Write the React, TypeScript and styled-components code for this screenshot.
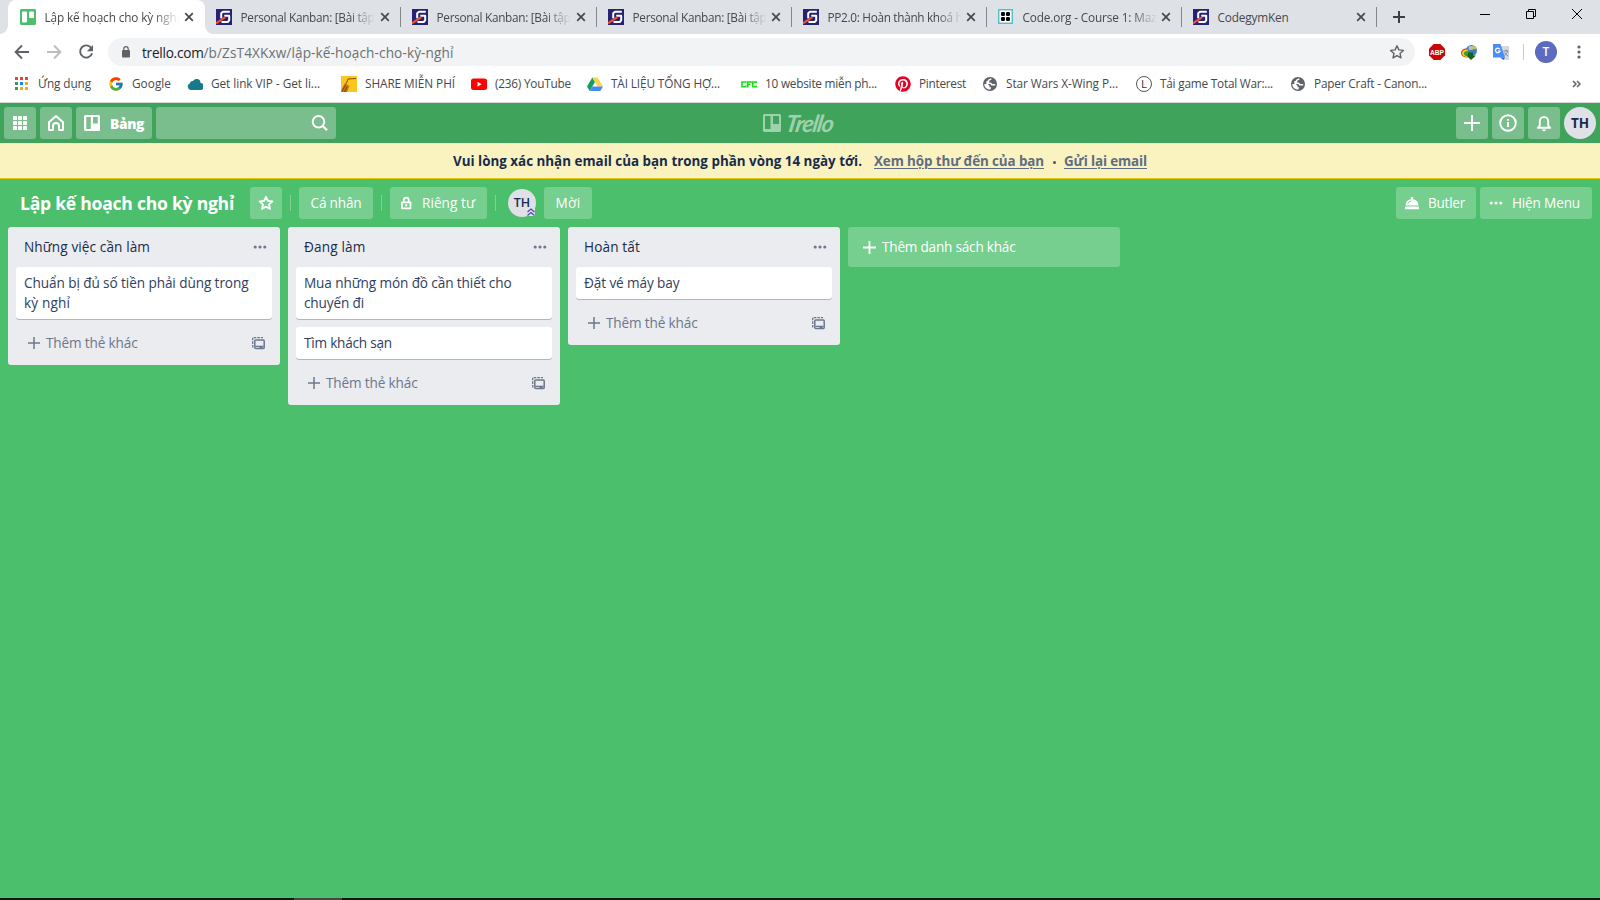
import React, { useLayoutEffect, useRef } from 'react';
import styled, { createGlobalStyle, css } from 'styled-components';
import { FcGoogle } from 'react-icons/fc';
import { FaPinterest } from 'react-icons/fa';

const Global = createGlobalStyle`
  * { box-sizing: border-box; }
  body { margin: 0; overflow: hidden; font-family: "Open Sans", "Noto Sans", sans-serif; }
  svg { display: block; flex: none; }
`;

/* ---------- text tracked to a given line width ---------- */

const Tracked = styled.span`
  display: inline-block;
  white-space: nowrap;
  flex: none;
  text-decoration: inherit;
`;

function Fit({ w, children }: { w: number; children: string }) {
  const ref = useRef<HTMLSpanElement>(null);
  useLayoutEffect(() => {
    const el = ref.current;
    if (!el) return;
    el.style.letterSpacing = '0px';
    const natural = el.getBoundingClientRect().width;
    el.style.letterSpacing = `${(w - natural) / children.length}px`;
  }, [w, children]);
  return <Tracked ref={ref}>{children}</Tracked>;
}

/* ---------- browser window ---------- */

const Screen = styled.div`
  width: 1600px;
  height: 900px;
  display: flex;
  flex-direction: column;
  overflow: hidden;
  background: #4bbf6b;
`;

const TabStrip = styled.div`
  height: 34px;
  flex: none;
  display: flex;
  background: #dee1e6;
  padding-left: 8px;
`;

const Tab = styled.div<{ $w: number; $active?: boolean }>`
  position: relative;
  width: ${p => p.$w}px;
  height: 34px;
  flex: none;
  display: flex;
  align-items: center;
  padding: 0 10px 0 ${p => (p.$active ? 12 : 11)}px;
  gap: 8px;
  font-size: 11.8px;
  color: #45494d;
  ${p =>
    p.$active
      ? css`
          background: #fff;
          border-radius: 8px 8px 0 0;
          &::before, &::after {
            content: '';
            position: absolute;
            bottom: 0;
            width: 8px;
            height: 8px;
          }
          &::before { left: -8px; background: radial-gradient(circle at 0 0, #dee1e6 7.5px, #fff 8px); }
          &::after { right: -8px; background: radial-gradient(circle at 100% 0, #dee1e6 7.5px, #fff 8px); }
        `
      : css`
          &::after {
            content: '';
            position: absolute;
            right: 0;
            top: 7px;
            width: 1px;
            height: 20px;
            background: #84878b;
          }
        `}
`;

const TabTitle = styled.div<{ $fade: boolean }>`
  width: 137px;
  flex: none;
  margin-right: -10px;
  padding-left: 0.5px;
  white-space: nowrap;
  line-height: 20px;
  ${p => p.$fade && css`mask-image: linear-gradient(to right, #000 110px, transparent 135px);`}
`;

const TabClose = styled.div`
  margin-left: auto;
  padding-right: 1px;
`;

const NewTab = styled.div`
  padding: 11px 0 0 16px;
  color: #3c4043;
`;

const WindowButtons = styled.div`
  margin-left: auto;
  display: flex;
  padding: 8px 17px 0 0;
  gap: 34px;
`;

const Toolbar = styled.div`
  height: 34px;
  flex: none;
  display: flex;
  align-items: center;
  background: #fff;
  padding-left: 14px;
`;

const NavIcons = styled.div`
  display: flex;
  gap: 16px;
  width: 94px;
  padding-top: 1px;
`;

const Omnibox = styled.div`
  width: 1307px;
  height: 28px;
  margin-top: 2px;
  flex: none;
  display: flex;
  align-items: center;
  padding: 0 10px 0 13px;
  border-radius: 14px;
  background: #f1f3f4;
  font-size: 13.6px;
  color: #6c7074;
  svg:last-child { margin-left: auto; }
`;

const Host = styled.span`
  color: #202124;
  margin-left: 11px;
`;

const Extensions = styled.div`
  display: flex;
  align-items: center;
  flex: 1;
  padding: 2px 0 0 14px;
`;

const ExtSlot = styled.div`
  width: 32px;
  height: 16px;
`;

const ToolbarRule = styled.div`
  width: 1px;
  height: 16px;
  margin-left: -2px;
  background: #c8cbcf;
`;

const Profile = styled.div`
  width: 22px;
  height: 22px;
  margin: 0 20px 0 11px;
  border-radius: 50%;
  background: #5c6bc0;
  color: #fff;
  font-size: 12px;
  font-weight: 600;
  line-height: 22px;
  text-align: center;
`;

const Bookmarks = styled.div`
  height: 35px;
  flex: none;
  display: flex;
  align-items: center;
  padding: 0 19px 2px 14px;
  background: #fff;
  border-bottom: 1px solid #d4d6d9;
  font-size: 11.8px;
  color: #45494d;
`;

const Bookmark = styled.div<{ $w: number }>`
  width: ${p => p.$w}px;
  display: flex;
  align-items: center;
  gap: 8px;
  flex: none;
  span { margin-top: -2px; }
`;

const More = styled.div`
  margin-left: auto;
`;

/* ---------- Trello chrome ---------- */

const Header = styled.div`
  height: 40px;
  flex: none;
  display: grid;
  grid-template-columns: 1fr auto 1fr;
  align-items: center;
  padding: 0 4px;
  background: #40a35b;
`;

const HeaderSide = styled.div<{ $end?: boolean }>`
  display: flex;
  gap: 4px;
  justify-content: ${p => (p.$end ? 'flex-end' : 'flex-start')};
`;

const HeaderButton = styled.div<{ $w?: number }>`
  width: ${p => p.$w ?? 32}px;
  height: 32px;
  display: flex;
  align-items: center;
  justify-content: center;
  gap: 10px;
  border-radius: 3px;
  background: #79be8c;
  color: #fff;
  font-size: 13.8px;
  font-weight: 800;
`;

const Search = styled(HeaderButton)`
  justify-content: flex-end;
  padding-right: 7px;
`;

const Logo = styled.div`
  display: flex;
  align-items: center;
  gap: 5px;
  height: 40px;
  color: #9fd1ad;
`;

const LogoWord = styled.div`
  font-family: Lato, sans-serif;
  font-style: italic;
  font-weight: 700;
  font-size: 23.5px;
  line-height: 38px;
  width: 51px;
  transform: skewX(-10deg);
`;

const Avatar = styled.div<{ $size: number }>`
  position: relative;
  width: ${p => p.$size}px;
  height: ${p => p.$size}px;
  line-height: ${p => p.$size}px;
  flex: none;
  border-radius: 50%;
  background: #dfe1e6;
  color: #172b4d;
  font-size: ${p => (p.$size === 32 ? 13.5 : 12.5)}px;
  font-weight: ${p => (p.$size === 32 ? 700 : 600)};
  text-align: center;
`;

const AdminBadge = styled.svg`
  position: absolute;
  right: 1px;
  bottom: 1px;
`;

const Banner = styled.div`
  height: 36px;
  flex: none;
  display: flex;
  align-items: center;
  padding: 0 0 0 453px;
  background: #faf3c0;
  border-bottom: 1px solid #e6c60d;
  color: #172b4d;
  font-size: 13.4px;
  font-weight: 700;
`;

const BannerLink = styled.span<{ $gap: number }>`
  margin-left: ${p => p.$gap}px;
  color: #5e6c84;
  text-decoration: underline;
  text-underline-offset: 2px;
  text-decoration-thickness: 1px;
  text-decoration-skip-ink: auto;
`;

const BannerDot = styled.i`
  width: 3px;
  height: 3px;
  margin: 4px 0 0 9px;
  border-radius: 50%;
  background: #42526e;
`;

const BoardBar = styled.div`
  height: 48px;
  flex: none;
  display: flex;
  align-items: center;
  padding: 0 8px 0 20px;
  color: #fff;
`;

const BoardTitle = styled.div`
  width: 230px;
  font-size: 17.6px;
  font-weight: 700;
  line-height: 28px;
`;

const BoardButton = styled.div<{ $w: number }>`
  width: ${p => p.$w}px;
  height: 32px;
  display: flex;
  align-items: center;
  padding: 0 9px;
  gap: 9px;
  flex: none;
  border-radius: 3px;
  background: #76ce8f;
  font-size: 13.6px;
  font-weight: 500;
  color: #fff;
  span { margin-top: -1px; }
`;

const CenterButton = styled(BoardButton)`
  justify-content: center;
  padding: 0;
`;

const BoardRule = styled.div<{ $after?: number }>`
  width: 1px;
  height: 16px;
  margin: 0 ${p => p.$after ?? 8}px 0 8px;
  background: #81d298;
`;

const BoardRight = styled.div`
  display: flex;
  gap: 4px;
  margin-left: auto;
`;

const Gap = styled.div`
  width: 8px;
`;

/* ---------- lists ---------- */

const Lists = styled.div`
  flex: 1;
  display: flex;
  align-items: flex-start;
  gap: 8px;
  padding-left: 8px;
`;

const List = styled.div`
  width: 272px;
  padding: 0 8px;
  border-radius: 3px;
  background: #ebecf0;
  color: #172b4d;
`;

const ListHead = styled.div`
  height: 40px;
  display: flex;
  align-items: center;
  justify-content: space-between;
  padding: 0 5px 0 8px;
  font-size: 13.6px;
  font-weight: 500;
  span { margin-top: -1px; }
`;

const Card = styled.div`
  margin-bottom: 8px;
  padding: 6px 8px;
  border-radius: 3px;
  background: #fff;
  box-shadow: 0 1px 0 #b1b8c5;
  color: #2f4160;
  font-size: 13.6px;
  line-height: 20px;
`;

const Line = styled.div`
  height: 20px;
`;

const AddCard = styled.div`
  height: 38px;
  display: flex;
  align-items: center;
  padding: 0 7px 6px 12px;
  gap: 6px;
  color: #6b778c;
  font-size: 13.6px;
  span { margin-top: -1px; }
  svg:last-child { margin-left: auto; }
`;

const AddList = styled.div`
  width: 272px;
  height: 40px;
  display: flex;
  align-items: center;
  padding-left: 15px;
  gap: 6px;
  border-radius: 3px;
  background: #76ce8f;
  color: #fff;
  font-size: 13.6px;
  span { margin-top: -1px; }
`;

const Taskbar = styled.div`
  height: 2px;
  flex: none;
  background: #0b1c12;
  padding-left: 294px;
`;

const ActiveTask = styled.div`
  width: 48px;
  height: 2px;
  background: #434845;
`;

/* ---------- icons ---------- */

const CodegymIcon = () => (
  <svg width="16" height="16" viewBox="0 0 16 16">
    <rect width="16" height="16" fill="#262377" />
    <path d="M13.800 2.700H7L5.200 4.300v5M8.300 6.800h4.900v4.500l-1.500 1.700H5.500" fill="none" stroke="#fff" strokeWidth="2" strokeLinejoin="round" />
    <path d="M0 14.300 9.300 8.200" stroke="#f4512c" strokeWidth="2" />
  </svg>
);

const TrelloFav = () => (
  <svg width="16" height="16" viewBox="0 0 16 16">
    <rect width="16" height="16" rx="1.500" fill="#4bbf6b" />
    <rect x="2" y="2.500" width="5" height="11" rx="1" fill="#fff" />
    <rect x="9" y="2.500" width="5" height="6.500" rx="1" fill="#fff" />
  </svg>
);

const CodeOrgIcon = () => (
  <svg width="16" height="16" viewBox="0 0 16 16">
    <rect x=".75" y=".75" width="13.500" height="13.500" fill="#fff" stroke="#45b8c0" strokeWidth="1.300" />
    <g fill="#000">
      <rect x="3" y="3" width="4" height="4" rx="1.300" /><rect x="8" y="3" width="4" height="4" rx="1.300" />
      <rect x="3" y="8" width="4" height="4" rx="1.300" /><rect x="8" y="8" width="4" height="4" rx="1.300" />
    </g>
  </svg>
);

const CloseIcon = () => (
  <svg width="10" height="10" viewBox="0 0 10 10">
    <path d="M1.200 1.200 8.800 8.800M8.800 1.200 1.200 8.800" stroke="#45494d" strokeWidth="1.700" />
  </svg>
);

const PlusIcon = ({ size, stroke }: { size: number; stroke: number }) => (
  <svg width={size} height={size} viewBox={`0 0 ${size} ${size}`}>
    <path d={`M${size / 2} 0V${size}M0 ${size / 2}H${size}`} stroke="currentColor" strokeWidth={stroke} />
  </svg>
);

const Arrow = ({ flip, color }: { flip?: boolean; color: string }) => (
  <svg width="16" height="16" viewBox="0 0 16 16">
    <path
      d={flip ? 'M1 8h12.700M8 1.500 14.400 8 8 14.500' : 'M15 8H2.300M8 1.500 1.600 8 8 14.500'}
      fill="none" stroke={color} strokeWidth="1.900"
    />
  </svg>
);

const ReloadIcon = () => (
  <svg width="16" height="16" viewBox="0 0 16 16">
    <path d="M13.400 4.200A6.100 6.100 0 1 0 14.100 9.200" fill="none" stroke="#5f6368" strokeWidth="1.900" />
    <path d="M15 1v6.200H8.800Z" fill="#5f6368" />
  </svg>
);

const LockIcon = () => (
  <svg width="10" height="12" viewBox="0 0 10 12">
    <rect x="1" y="4" width="8" height="7.500" rx="1" fill="#5f6368" />
    <path d="M2.800 4.500V2.900a2.200 2.200 0 0 1 4.400 0v1.600" fill="none" stroke="#5f6368" strokeWidth="1.200" />
  </svg>
);

const StarIcon = ({ size, color, stroke }: { size: number; color: string; stroke: number }) => (
  <svg width={size} height={size} viewBox="0 0 16 16">
    <path
      d="m8 1.800 1.900 4.100 4.500.5-3.400 3 1 4.500L8 11.600l-4 2.300 1-4.500-3.400-3 4.500-.5Z"
      fill="none" stroke={color} strokeWidth={stroke} strokeLinejoin="round"
    />
  </svg>
);

const AbpIcon = () => (
  <svg width="16" height="16" viewBox="0 0 16 16">
    <path d="M4.700 0h6.600L16 4.700v6.600L11.300 16H4.700L0 11.300V4.700Z" fill="#cc0505" />
    <text x="8" y="10.900" textAnchor="middle" fontSize="7.500" fontWeight="700" fontFamily="Liberation Sans, sans-serif" fill="#fff" textLength="14" lengthAdjust="spacingAndGlyphs">ABP</text>
  </svg>
);

const IdmIcon = () => (
  <svg width="16" height="16" viewBox="0 0 16 16">
    <circle cx="10.500" cy="6.500" r="5.500" fill="#4279b8" />
    <circle cx="9.500" cy="4" r="2.200" fill="#9fc4e8" />
    <path d="M11 2c2-1 4 1 4.500 3-2 .5-3-.5-4.500 1Z" fill="#b9c46a" />
    <path d="M6.500 4.500C3 4 0 6 0 9s3 4.500 6.500 4.500L8 10Z" fill="#d8402a" />
    <path d="M6.500 5.500C3.500 5.300 1 7 1 9.300S4 13 6.500 13L8 9.500Z" fill="#f2d21f" />
    <path d="M7 7C4.500 6.800 2.800 8 2.800 9.500s1.700 2.700 4 2.700L9 9Z" fill="#36a045" />
    <path d="M7 8.500h5v3h3L10 16l-4.500-4.500H7Z" fill="#17601c" />
  </svg>
);

const TranslateIcon = () => (
  <svg width="16" height="16" viewBox="0 0 16 16">
    <path d="M7 2h9v14h-5Z" fill="#d5d8dc" />
    <path d="M0 0h7.500L12 13.500H0Z" fill="#4a8df6" />
    <path d="M7 13.500h5L10.500 16Z" fill="#3367d6" />
    <path d="M6.800 5.300A2.300 2.300 0 1 0 7 7H5" fill="none" stroke="#fff" strokeWidth="1.200" />
    <path d="M10.500 7h5M13 5.800V7M14.700 7c-.5 2-2 3.500-3.500 4.500M11.500 8.500c1 1.500 2 2.500 3.500 3.500" fill="none" stroke="#7b8794" strokeWidth=".9" />
  </svg>
);

const AppsIcon = () => {
  const colors = ['#ea4335', '#ea4335', '#ea4335', '#34a053', '#1a88f0', '#f5ab12', '#34a053', '#f5ab12', '#f5ab12'];
  return (
    <svg width="16" height="16" viewBox="0 0 16 16">
      {colors.map((c, i) => (
        <rect key={i} x={1 + (i % 3) * 5} y={1 + Math.floor(i / 3) * 5} width="3" height="3" fill={c} />
      ))}
    </svg>
  );
};

const GoogleIcon = () => <FcGoogle size={16} />;

const CloudIcon = () => (
  <svg width="16" height="16" viewBox="0 0 16 16">
    <path d="M3.500 14a3.500 3.500 0 0 1-.5-6.700A2.700 2.700 0 0 1 6 5a4 4 0 0 1 7.500 2A3.500 3.500 0 0 1 13 14Z" fill="#17798a" />
  </svg>
);

const ShareIcon = () => (
  <svg width="16" height="16" viewBox="0 0 16 16">
    <rect width="16" height="16" fill="#fac51c" />
    <path d="M0 16 1 12.500 4 7l1.500-.5L6.500 9l2 1L6 16Z" fill="#c07a18" />
    <path d="M1 15.500 4.500 9M3.500 16l2.500-5M5.500 7 7 3l8-.5" stroke="#7d3b10" fill="none" strokeWidth=".9" />
  </svg>
);

const YoutubeIcon = () => (
  <svg width="16" height="16" viewBox="0 0 16 16">
    <rect y="2.500" width="16" height="11.500" rx="2.500" fill="#f00" />
    <path d="M6.500 5.800v4.900l4-2.450Z" fill="#fff" />
  </svg>
);

const DriveIcon = () => (
  <svg width="16" height="16" viewBox="0 0 16 16">
    <path d="M5.300 1.500 0 10.500 2.700 15 8 6Z" fill="#11a05e" />
    <path d="M5.300 1.500h5.200L16 10.500h-5.300Z" fill="#ffd04b" />
    <path d="M2.700 15 5.300 10.500H16L13.300 15Z" fill="#4688f4" />
  </svg>
);

const CfcIcon = () => (
  <svg width="16" height="16" viewBox="0 0 16 16">
    <path d="M4.800 6.800V6H1v4.800h3.800V9.500M6.700 11.500V6H10v1M6.500 8.500h2.800M15.200 7V6h-3.400v4.800h3.400V9.500" fill="none" stroke="#12e012" strokeWidth="1.600" />
  </svg>
);

const LetterIcon = () => (
  <svg width="16" height="16" viewBox="0 0 16 16">
    <circle cx="8" cy="8" r="7.500" fill="#fff" stroke="#555" />
    <text x="8" y="12" textAnchor="middle" fontSize="11.500" fill="#333">L</text>
  </svg>
);

const PinterestIcon = () => <FaPinterest size={16} color="#e60023" />;

const GlobeIcon = () => (
  <svg width="16" height="16" viewBox="0 0 16 16">
    <circle cx="8" cy="8" r="7" fill="#5f6368" />
    <path d="M9.300 2.800 6.500 4.300v1.500H5v1.500h3.800l1 1.500h3.400" fill="none" stroke="#fff" strokeWidth="1.500" strokeLinejoin="round" />
    <path d="M2.300 8h3.500l1.700 1.700v1.600h1.600l-.6 2.200C4.800 13.700 2.200 11.200 2.300 8Z" fill="#fff" />
  </svg>
);

const ChevronsIcon = () => (
  <svg width="9" height="8" viewBox="0 0 9 8">
    <path d="m1 1 3 3-3 3M5 1l3 3-3 3" fill="none" stroke="#5f6368" strokeWidth="1.500" />
  </svg>
);

const KebabIcon = () => (
  <svg width="4" height="14" viewBox="0 0 4 14" fill="#5f6368">
    <circle cx="2" cy="2" r="1.600" /><circle cx="2" cy="7" r="1.600" /><circle cx="2" cy="12" r="1.600" />
  </svg>
);

const GridIcon = () => (
  <svg width="14" height="14" viewBox="0 0 14 14" fill="#fff">
    {[0, 5, 10].map(y => [0, 5, 10].map(x => <rect key={`${x}-${y}`} x={x} y={y} width="4" height="4" rx=".4" />))}
  </svg>
);

const HomeIcon = () => (
  <svg width="18" height="18" viewBox="0 0 18 18" fill="none" stroke="#fff" strokeWidth="2" strokeLinejoin="round">
    <path d="M2 8.300 9 2l7 6.300V16h-4v-4a3 3 0 0 0-6 0v4H2Z" />
  </svg>
);

const BoardIcon = () => (
  <svg width="16" height="16" viewBox="0 0 16 16">
    <path fillRule="evenodd" d="M1.500 0h13A1.500 1.500 0 0 1 16 1.500v13a1.500 1.500 0 0 1-1.500 1.500h-13A1.500 1.500 0 0 1 0 14.500v-13A1.500 1.500 0 0 1 1.500 0ZM2.300 2v12h4.500V2ZM9 2v6.500h4.700V2Z" fill="#fff" />
  </svg>
);

const LogoMark = () => (
  <svg width="18" height="18" viewBox="0 0 18 18">
    <path fillRule="evenodd" d="M1 0h16l1 1v16l-1 1H1l-1-1V1ZM2 2v13h5.500V2ZM10 2v8h6V2Z" fill="currentColor" />
  </svg>
);

const SearchIcon = () => (
  <svg width="18" height="18" viewBox="0 0 18 18" fill="none" stroke="#fff" strokeWidth="2">
    <circle cx="7.500" cy="7.800" r="5.800" /><path d="m11.500 11.800 4.500 4.500" strokeWidth="2.300" />
  </svg>
);

const InfoIcon = () => (
  <svg width="18" height="18" viewBox="0 0 18 18">
    <circle cx="9" cy="9" r="7.800" fill="none" stroke="#fff" strokeWidth="1.900" />
    <path d="M9 8v5M9 5v1.800" stroke="#fff" strokeWidth="1.900" />
  </svg>
);

const BellIcon = () => (
  <svg width="16" height="18" viewBox="0 0 16 18">
    <path d="M3.800 11.500V7.200a4.200 4.200 0 0 1 8.400 0v4.300l2 2.300H1.800Z" fill="none" stroke="#fff" strokeWidth="1.900" strokeLinejoin="round" />
    <path d="M6 15.500h4a2 1.800 0 0 1-4 0Z" fill="#fff" />
  </svg>
);

const PadlockIcon = () => (
  <svg width="14" height="16" viewBox="0 0 14 16">
    <rect x="3" y="7.300" width="8.500" height="6" fill="none" stroke="#fff" strokeWidth="1.800" strokeLinejoin="round" />
    <path d="M4.800 7V5a2.450 2.450 0 0 1 4.900 0v2" fill="none" stroke="#fff" strokeWidth="1.800" />
    <rect x="6.250" y="9.300" width="2" height="2" fill="#fff" />
  </svg>
);

const ButlerIcon = () => (
  <svg width="14" height="14" viewBox="0 0 14 14">
    <path d="M.5 9.500a6.500 6.500 0 0 1 5.300-6.300L6 1h2l.2 2.200a6.500 6.500 0 0 1 5.300 6.300Z" fill="#fff" />
    <path d="M2.800 7.800c.5-1.500 1.700-2.600 3.500-2.900" fill="none" stroke="#76ce8f" />
    <rect y="10.500" width="14" height="2.800" rx=".5" fill="#fff" />
  </svg>
);

const DotsIcon = ({ color }: { color: string }) => (
  <svg width="14" height="4" viewBox="0 0 14 4" fill={color}>
    <circle cx="2.200" cy="2" r="1.550" /><circle cx="7" cy="2" r="1.550" /><circle cx="11.800" cy="2" r="1.550" />
  </svg>
);

const TemplateIcon = () => (
  <svg width="13" height="13" viewBox="0 0 13 13" fill="none" stroke="#6b778c">
    <path d="M.7 10.500V.7H11" strokeWidth="1.300" strokeDasharray="2.600 1" />
    <rect x="2.800" y="3" width="9.400" height="8.500" rx="1" strokeWidth="1.500" />
    <path d="M3.500 9.300h8M7.500 10.500h3" strokeWidth="1.300" />
  </svg>
);

/* ---------- data ---------- */

const tabs: { w: number; icon: React.FC; title: string; tw: number; fade?: boolean }[] = [
  { w: 197, icon: TrelloFav, title: 'Lập kế hoạch cho kỳ nghỉ', tw: 135, fade: true },
  { w: 196, icon: CodegymIcon, title: 'Personal Kanban: [Bài tập', tw: 134, fade: true },
  { w: 196, icon: CodegymIcon, title: 'Personal Kanban: [Bài tập', tw: 134, fade: true },
  { w: 195, icon: CodegymIcon, title: 'Personal Kanban: [Bài tập', tw: 134, fade: true },
  { w: 195, icon: CodegymIcon, title: 'PP2.0: Hoàn thành khoá h', tw: 135, fade: true },
  { w: 195, icon: CodeOrgIcon, title: 'Code.org - Course 1: Maz', tw: 134, fade: true },
  { w: 195, icon: CodegymIcon, title: 'CodegymKen', tw: 71 },
];

const bookmarks: { w: number; icon: React.FC; title: string; tw: number }[] = [
  { w: 94, icon: AppsIcon, title: 'Ứng dụng', tw: 53 },
  { w: 79, icon: GoogleIcon, title: 'Google', tw: 39 },
  { w: 154, icon: CloudIcon, title: 'Get link VIP - Get li...', tw: 109 },
  { w: 130, icon: ShareIcon, title: 'SHARE MIỄN PHÍ', tw: 90 },
  { w: 116, icon: YoutubeIcon, title: '(236) YouTube', tw: 76 },
  { w: 154, icon: DriveIcon, title: 'TÀI LIỆU TỔNG HỢ...', tw: 109 },
  { w: 154, icon: CfcIcon, title: '10 website miễn ph...', tw: 112 },
  { w: 87, icon: PinterestIcon, title: 'Pinterest', tw: 47 },
  { w: 154, icon: GlobeIcon, title: 'Star Wars X-Wing P...', tw: 112 },
  { w: 154, icon: LetterIcon, title: 'Tải game Total War:...', tw: 113 },
  { w: 140, icon: GlobeIcon, title: 'Paper Craft - Canon...', tw: 113 },
];

type Txt = [string, number];
const lists: { title: Txt; cards: Txt[][] }[] = [
  {
    title: ['Những việc cần làm', 126],
    cards: [[['Chuẩn bị đủ số tiền phải dùng trong', 224.5], ['kỳ nghỉ', 46]]],
  },
  {
    title: ['Đang làm', 61.5],
    cards: [
      [['Mua những món đồ cần thiết cho', 207.5], ['chuyến đi', 60]],
      [['Tìm khách sạn', 88]],
    ],
  },
  { title: ['Hoàn tất', 56], cards: [[['Đặt vé máy bay', 95.5]]] },
];

export default function App() {
  return (
    <Screen>
      <Global />
      <TabStrip>
        {tabs.map((t, i) => (
          <Tab key={i} $w={t.w} $active={i === 0}>
            <t.icon />
            <TabTitle $fade={!!t.fade}><Fit w={t.tw}>{t.title}</Fit></TabTitle>
            <TabClose><CloseIcon /></TabClose>
          </Tab>
        ))}
        <NewTab><PlusIcon size={12} stroke={2} /></NewTab>
        <WindowButtons>
          <svg width="12" height="12"><path d="M1 6.500h10" stroke="#000" /></svg>
          <svg width="12" height="12" fill="none" stroke="#000"><path d="M1.500 3.500h7v7h-7ZM3.500 3.500v-2h7v7h-2" /></svg>
          <svg width="12" height="12" stroke="#000"><path d="m1 1 10 10M11 1 1 11" /></svg>
        </WindowButtons>
      </TabStrip>

      <Toolbar>
        <NavIcons>
          <Arrow color="#5f6368" />
          <Arrow flip color="#bbbdbf" />
          <ReloadIcon />
        </NavIcons>
        <Omnibox>
          <LockIcon />
          <Host><Fit w={61.5}>trello.com</Fit></Host>
          <Fit w={250}>/b/ZsT4XKxw/lập-kế-hoạch-cho-kỳ-nghỉ</Fit>
          <StarIcon size={16} color="#5f6368" stroke={1.4} />
        </Omnibox>
        <Extensions>
          <ExtSlot><AbpIcon /></ExtSlot>
          <ExtSlot><IdmIcon /></ExtSlot>
          <ExtSlot><TranslateIcon /></ExtSlot>
          <ToolbarRule />
          <Profile>T</Profile>
          <KebabIcon />
        </Extensions>
      </Toolbar>

      <Bookmarks>
        {bookmarks.map(b => (
          <Bookmark key={b.title} $w={b.w}>
            <b.icon />
            <Fit w={b.tw}>{b.title}</Fit>
          </Bookmark>
        ))}
        <More><ChevronsIcon /></More>
      </Bookmarks>

      <Header>
        <HeaderSide>
          <HeaderButton><GridIcon /></HeaderButton>
          <HeaderButton><HomeIcon /></HeaderButton>
          <HeaderButton $w={76}><BoardIcon /><Fit w={34}>Bảng</Fit></HeaderButton>
          <Search $w={180}><SearchIcon /></Search>
        </HeaderSide>
        <Logo><LogoMark /><LogoWord><Fit w={54}>Trello</Fit></LogoWord></Logo>
        <HeaderSide $end>
          <HeaderButton><PlusIcon size={16} stroke={2} /></HeaderButton>
          <HeaderButton><InfoIcon /></HeaderButton>
          <HeaderButton><BellIcon /></HeaderButton>
          <Avatar $size={32}>TH</Avatar>
        </HeaderSide>
      </Header>

      <Banner>
        <Fit w={409}>Vui lòng xác nhận email của bạn trong phần vòng 14 ngày tới.</Fit>
        <BannerLink $gap={12}><Fit w={170}>Xem hộp thư đến của bạn</Fit></BannerLink>
        <BannerDot />
        <BannerLink $gap={8}><Fit w={83}>Gửi lại email</Fit></BannerLink>
      </Banner>

      <BoardBar>
        <BoardTitle><Fit w={214}>Lập kế hoạch cho kỳ nghỉ</Fit></BoardTitle>
        <CenterButton $w={32}><StarIcon size={16} color="#fff" stroke={1.9} /></CenterButton>
        <BoardRule />
        <CenterButton $w={74}><Fit w={51}>Cá nhân</Fit></CenterButton>
        <BoardRule />
        <BoardButton $w={97}><PadlockIcon /><Fit w={53}>Riêng tư</Fit></BoardButton>
        <BoardRule $after={12} />
        <Avatar $size={28}>
          TH
          <AdminBadge width="8" height="8" viewBox="0 0 8 8">
            <rect width="8" height="8" fill="#dfe1e6" />
            <path d="m.5 4 3.500-3 3.500 3M.5 7.500 4 4.500l3.500 3" fill="none" stroke="#5243aa" strokeWidth="1.200" />
          </AdminBadge>
        </Avatar>
        <Gap />
        <CenterButton $w={48}><Fit w={25}>Mời</Fit></CenterButton>
        <BoardRight>
          <BoardButton $w={80}><ButlerIcon /><Fit w={37}>Butler</Fit></BoardButton>
          <BoardButton $w={112}><DotsIcon color="#fff" /><Fit w={68}>Hiện Menu</Fit></BoardButton>
        </BoardRight>
      </BoardBar>

      <Lists>
        {lists.map(l => (
          <List key={l.title[0]}>
            <ListHead>
              <Fit w={l.title[1]}>{l.title[0]}</Fit>
              <DotsIcon color="#6b778c" />
            </ListHead>
            {l.cards.map((c, i) => (
              <Card key={i}>
                {c.map(([text, w]) => <Line key={text}><Fit w={w}>{text}</Fit></Line>)}
              </Card>
            ))}
            <AddCard>
              <PlusIcon size={12} stroke={1.5} />
              <Fit w={91.5}>Thêm thẻ khác</Fit>
              <TemplateIcon />
            </AddCard>
          </List>
        ))}
        <AddList>
          <PlusIcon size={13} stroke={1.8} />
          <Fit w={133.5}>Thêm danh sách khác</Fit>
        </AddList>
      </Lists>

      <Taskbar><ActiveTask /></Taskbar>
    </Screen>
  );
}
